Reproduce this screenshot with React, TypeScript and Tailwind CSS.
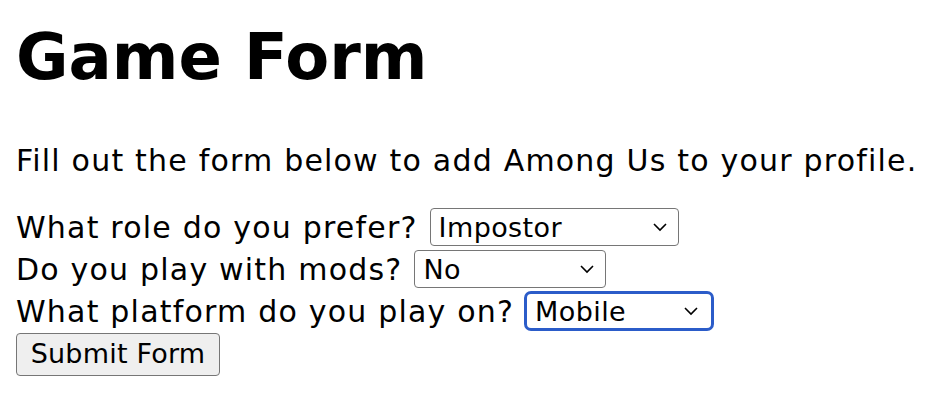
const Chevron = () => (
  <svg width="16" height="10" viewBox="0 0 16 10" className="shrink-0">
    <path d="M2 2 L8 8 L14 2" fill="none" stroke="#000" strokeWidth="1.6" />
  </svg>
);

const FakeSelect = ({ value, width, focused }: { value: string; width: string; focused?: boolean }) => (
  <span
    className={`inline-flex items-center justify-between bg-white text-[27px] tracking-[0.4px] leading-none ${width} ${
      focused
        ? "h-[40px] -ml-[2px] border-[3px] border-[#2b5cc9] rounded-[7px] pl-[8px] pr-[12px]"
        : "h-[38px] border border-[#767676] rounded-[4px] pl-[8px] pr-[10px]"
    }`}
  >
    <span>{value}</span>
    <Chevron />
  </span>
);

const App = () => {
  return (
    <div className="px-[16px] text-black bg-white min-h-[414px] font-['DejaVu_Sans',Verdana,sans-serif]">
      <h1 className="text-[64px] font-bold leading-none pt-[25px]">Game Form</h1>
      <p className="text-[30px] tracking-[1.2px] mt-[49px]">Fill out the form below to add Among Us to your profile.</p>
      <form className="mt-[23px] text-[30px] tracking-[1.2px] flex flex-col">
        <div className="flex items-center gap-[12px] h-[42px]">
          What role do you prefer? <FakeSelect value="Impostor" width="w-[249px]" />
        </div>
        <div className="flex items-center gap-[12px] h-[42px]">
          Do you play with mods? <FakeSelect value="No" width="w-[192px]" />
        </div>
        <div className="flex items-center gap-[12px] h-[42px]">
          What platform do you play on? <FakeSelect value="Mobile" width="w-[190px]" focused />
        </div>
        <div className="-mt-[2px]">
          <button
            type="button"
            className="h-[43px] w-[204px] rounded-[4px] border border-[#767676] bg-[#efefef] text-[27px] tracking-[0.2px]"
          >
            Submit Form
          </button>
        </div>
      </form>
    </div>
  );
};

export default App;
